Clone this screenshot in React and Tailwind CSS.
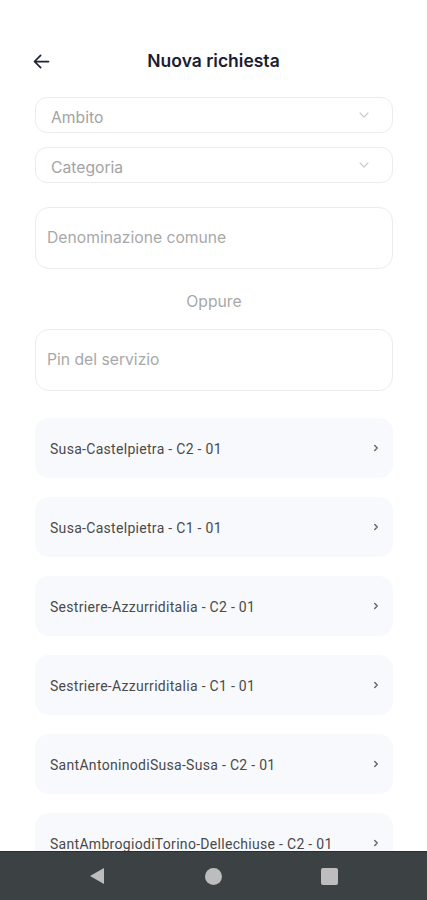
import React from 'react';

const items = [
  'Susa-Castelpietra - C2 - 01',
  'Susa-Castelpietra - C1 - 01',
  'Sestriere-Azzurriditalia - C2 - 01',
  'Sestriere-Azzurriditalia - C1 - 01',
  'SantAntoninodiSusa-Susa - C2 - 01',
  'SantAmbrogiodiTorino-Dellechiuse - C2 - 01',
];

const Chevron = ({ className }) => (
  <svg className={className} viewBox="0 0 24 24" fill="none" stroke="currentColor" strokeWidth="1.6" strokeLinecap="round" strokeLinejoin="round">
    <path d="M6 9l6 6 6-6" />
  </svg>
);

const Select = ({ label }) => (
  <div className="h-[36px] rounded-[12px] border border-[#ececec] flex items-center justify-between pl-[15px] pr-[20px]">
    <span className="text-[15.7px] text-[#a3a3a3] mt-[5px]">{label}</span>
    <Chevron className="w-[16px] h-[16px] text-[#c8c8c8]" />
  </div>
);

const Input = ({ label }) => (
  <div className="h-[62px] rounded-[14px] border border-[#ececec] flex items-center pl-[11px]">
    <span className="text-[15.7px] text-[#a8a8a8]">{label}</span>
  </div>
);

export default function App() {
  return (
    <div className="w-[427px] h-[900px] bg-white flex flex-col overflow-hidden font-['Inter',sans-serif]">
      <div className="flex-1 overflow-hidden">
        <div className="relative h-[122px] flex items-start justify-center pt-[49px]">
          <button className="absolute left-[31px] top-[51px] text-[#1f2333]">
            <svg className="w-[21px] h-[21px]" viewBox="0 0 24 24" fill="none" stroke="currentColor" strokeWidth="2" strokeLinecap="round" strokeLinejoin="round">
              <path d="M20 12H4M11 5l-7 7 7 7" />
            </svg>
          </button>
          <h1 className="text-[17.5px] font-semibold text-[#1b1d33] leading-[24px]">Nuova richiesta</h1>
        </div>
        <div className="pl-[35px] pr-[34px] -mt-[25px] flex flex-col">
          <Select label="Ambito" />
          <div className="h-[14px]" />
          <Select label="Categoria" />
          <div className="h-[24px]" />
          <Input label="Denominazione comune" />
          <div className="h-[60px] flex items-center justify-center text-[15.7px] text-[#a8a8a8] pt-[5px]">Oppure</div>
          <Input label="Pin del servizio" />
          <div className="flex flex-col gap-[19px] mt-[27px] font-['Roboto',sans-serif]">
            {items.map((t) => (
              <div key={t} className="h-[60px] rounded-[14px] bg-[#f8f9fc] flex items-center justify-between pl-[15px] pr-[12px]">
                <span className="text-[14px] text-[#4a4a4a] tracking-[0.3px] mt-[2px]">{t}</span>
                <svg className="w-[10px] h-[10px] text-[#666]" viewBox="0 0 24 24" fill="none" stroke="currentColor" strokeWidth="3.5" strokeLinecap="round" strokeLinejoin="round">
                  <path d="M9 6l6 6-6 6" />
                </svg>
              </div>
            ))}
          </div>
        </div>
      </div>
      <div className="h-[49px] shrink-0 bg-[#3c4144] border-t border-[#2a2e30] flex items-center">
        <div className="w-full flex items-center justify-between px-[89px]">
          <svg className="w-[16px] h-[18px]" viewBox="0 0 16 18"><path d="M15 1L1 9l14 8z" fill="#bdbdbd" /></svg>
          <div className="w-[17px] h-[17px] rounded-full bg-[#bdbdbd]" />
          <div className="w-[17px] h-[17px] rounded-[2px] bg-[#bdbdbd]" />
        </div>
      </div>
    </div>
  );
}
